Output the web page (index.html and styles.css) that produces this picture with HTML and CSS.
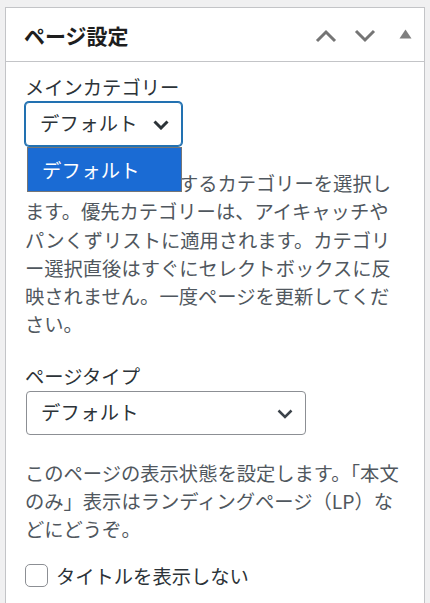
FILE: index.html
```html
<!DOCTYPE html>
<html lang="ja">
<head>
<meta charset="utf-8">
<title>ページ設定</title>
<link rel="stylesheet" href="styles.css">
</head>
<body>
<div class="panel">
  <div class="panel-header">
    <h2 class="panel-title">ページ設定</h2>
    <div class="panel-actions">
      <svg class="icon-chev" width="22" height="14" viewBox="0 0 22 14"><polyline points="2,12 11,3 20,12" fill="none" stroke="#757575" stroke-width="3"/></svg>
      <svg class="icon-chev" width="22" height="14" viewBox="0 0 22 14"><polyline points="2,2 11,11 20,2" fill="none" stroke="#757575" stroke-width="3"/></svg>
      <svg class="icon-tri" width="13" height="10" viewBox="0 0 13 10"><polygon points="0.5,9.5 6.5,0.5 12.5,9.5" fill="#7f7f7f"/></svg>
    </div>
  </div>
  <div class="panel-body">
    <div class="field">
      <div class="label">メインカテゴリー</div>
      <div class="select-wrap">
        <div class="select select-short is-focused">
          <span class="select-text">デフォルト</span>
          <svg class="select-chev" width="16" height="10" viewBox="0 0 16 10"><polyline points="1.5,1.5 8,8 14.5,1.5" fill="none" stroke="#2c3338" stroke-width="3"/></svg>
        </div>
        <div class="dropdown">
          <div class="option is-selected">デフォルト</div>
        </div>
      </div>
      <p class="help"><span class="under-dropdown">このページで表示</span>するカテゴリーを選択します。優先カテゴリーは、アイキャッチやパンくずリストに適用されます。カテゴリー選択直後はすぐにセレクトボックスに反映されません。一度ページを更新してください。</p>
    </div>
    <div class="field field-type">
      <div class="label">ページタイプ</div>
      <div class="select select-long">
        <span class="select-text">デフォルト</span>
        <svg class="select-chev" width="16" height="10" viewBox="0 0 16 10"><polyline points="1.5,1.5 8,8 14.5,1.5" fill="none" stroke="#3c434a" stroke-width="2.5"/></svg>
      </div>
      <p class="help help-2">このページの表示状態を設定します。「本文のみ」表示はランディングページ（LP）などにどうぞ。</p>
      <label class="check-row">
        <span class="checkbox"></span>
        <span class="check-text">タイトルを表示しない</span>
      </label>
    </div>
  </div>
</div>
</body>
</html>
```

FILE: styles.css
```css
html, body {
  margin: 0;
  padding: 0;
  background: #f0f0f1;
}

body {
  padding: 7px 5px 0 5px;
  font-family: "Noto Sans CJK JP", "Noto Sans", sans-serif;
  font-size: 19.3px;
  color: #2c3338;
  height: 100vh;
  box-sizing: border-box;
  overflow: hidden;
}

.panel {
  background: #ffffff;
  border: 1px solid #c3c4c7;
  border-bottom: none;
  height: 100%;
  box-sizing: border-box;
}

.panel-header {
  height: 53px;
  border-bottom: 1px solid #c3c4c7;
  display: flex;
  align-items: center;
  padding: 0 12px 0 18px;
}

.panel-title {
  margin: 2px 0 0 0;
  font-size: 21px;
  font-weight: 700;
  color: #1e1e1e;
  line-height: 1;
  flex: 1;
}

.panel-actions {
  display: flex;
  align-items: center;
  margin-top: 2px;
}

.icon-chev {
  display: block;
  margin-right: 17px;
}

.icon-tri {
  display: block;
  margin: 0 0 3px 6px;
}

.panel-body {
  padding: 11px 19px 0 19px;
}

.label {
  line-height: 28px;
  color: #2c3338;
}

.select-wrap {
  position: relative;
}

.select {
  box-sizing: border-box;
  height: 44px;
  border: 1px solid #8c8f94;
  border-radius: 4px;
  display: flex;
  align-items: center;
  padding: 0 12px 0 14px;
  background: #fff;
  color: #2c3338;
}

.select-short {
  width: 157px;
  margin-top: 1px;
}

.select.is-focused {
  border-color: #2271b1;
  box-shadow: 0 0 0 1px #2271b1;
}

.select-long {
  width: 280px;
  margin-left: 1px;
  margin-top: 1px;
}

.select-text {
  flex: 1;
  line-height: 1;
  letter-spacing: 0.3px;
}

.select-chev {
  display: block;
  margin-top: 2px;
}

.dropdown {
  position: absolute;
  z-index: 2;
  left: 2px;
  top: 45px;
  width: 155px;
  box-sizing: border-box;
  border: 1px solid #767676;
  background: #fff;
}

.option {
  height: 43px;
  display: flex;
  align-items: center;
  padding-left: 14px;
  letter-spacing: 0.3px;
}

.option.is-selected {
  background: #1a6bd4;
  color: #ffffff;
}

.help {
  margin: 23px 0 0 0;
  line-height: 28.3px;
  color: #50575e;
}

.under-dropdown {
  color: transparent;
}

.field-type {
  margin-top: 23px;
}

.help-2 {
  margin-top: 24px;
}

.check-row {
  display: flex;
  align-items: center;
  margin-top: 18px;
  line-height: 28px;
  color: #2c3338;
}

.checkbox {
  box-sizing: border-box;
  width: 23px;
  height: 23px;
  border: 1px solid #8c8f94;
  border-radius: 5px;
  background: #fff;
  margin-right: 8px;
}
```
